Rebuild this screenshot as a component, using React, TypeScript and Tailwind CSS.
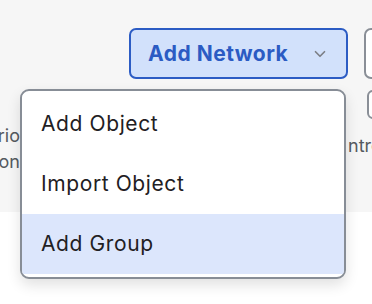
import { ChevronDown } from "lucide-react";

const items = [
  { id: "object", label: "Add Object", active: false },
  { id: "import", label: "Import Object", active: false },
  { id: "group", label: "Add Group", active: true },
];

export default function App() {
  return (
    <div
      className="relative w-[372px] h-[304px] overflow-hidden bg-white"
      style={{ fontFamily: "Inter, 'Noto Sans', sans-serif" }}
    >
      {/* Header strip */}
      <div className="h-[212px] bg-[#f6f6f6] flex flex-col">
        <div className="flex items-start gap-4 pl-[129px] pt-[28px]">
          <button className="flex-shrink-0 w-[219px] h-[51px] rounded-[7px] border-2 border-[#2c5cc4] bg-[#d2e1fb] flex items-center justify-between pl-[17px] pr-[17px]">
            <span className="text-[21px] font-bold text-[#2b5bc3] tracking-[0.5px]">Add Network</span>
            <ChevronDown className="w-[18px] h-[18px] text-[#7c7f86]" strokeWidth={2.25} />
          </button>
          <div className="flex flex-col gap-[11px] flex-shrink-0">
            <div className="w-[60px] h-[51px] rounded-[7px] border-2 border-[#8a8f97] bg-white" />
            <div className="ml-[3px] w-[40px] h-[29px] rounded-[6px] border-2 border-[#8a8f97] bg-white" />
          </div>
        </div>

        {/* Content behind the menu */}
        <div className="flex justify-between mt-[4px] text-[18px] leading-[26px] text-[#555a60]">
          <div className="-ml-[24px] w-[44px] text-right">
            <div>ario</div>
            <div>ion</div>
          </div>
          <div className="w-[30px] mt-[10px] -mr-[6px]">
            <div>ntro</div>
          </div>
        </div>
      </div>

      {/* Dropdown menu */}
      <div className="absolute left-[20px] top-[89px] w-[326px] rounded-[9px] border-2 border-[#878d96] bg-white py-[3px] shadow-[0_6px_14px_rgba(0,0,0,0.12)] overflow-hidden">
        {items.map((item) => (
          <div
            key={item.id}
            className={`h-[60px] flex items-center pl-[19px] text-[21px] tracking-[0.6px] text-[#1f2023] ${
              item.active ? "bg-[#dce6fc]" : "bg-white"
            }`}
          >
            {item.label}
          </div>
        ))}
      </div>
    </div>
  );
}
